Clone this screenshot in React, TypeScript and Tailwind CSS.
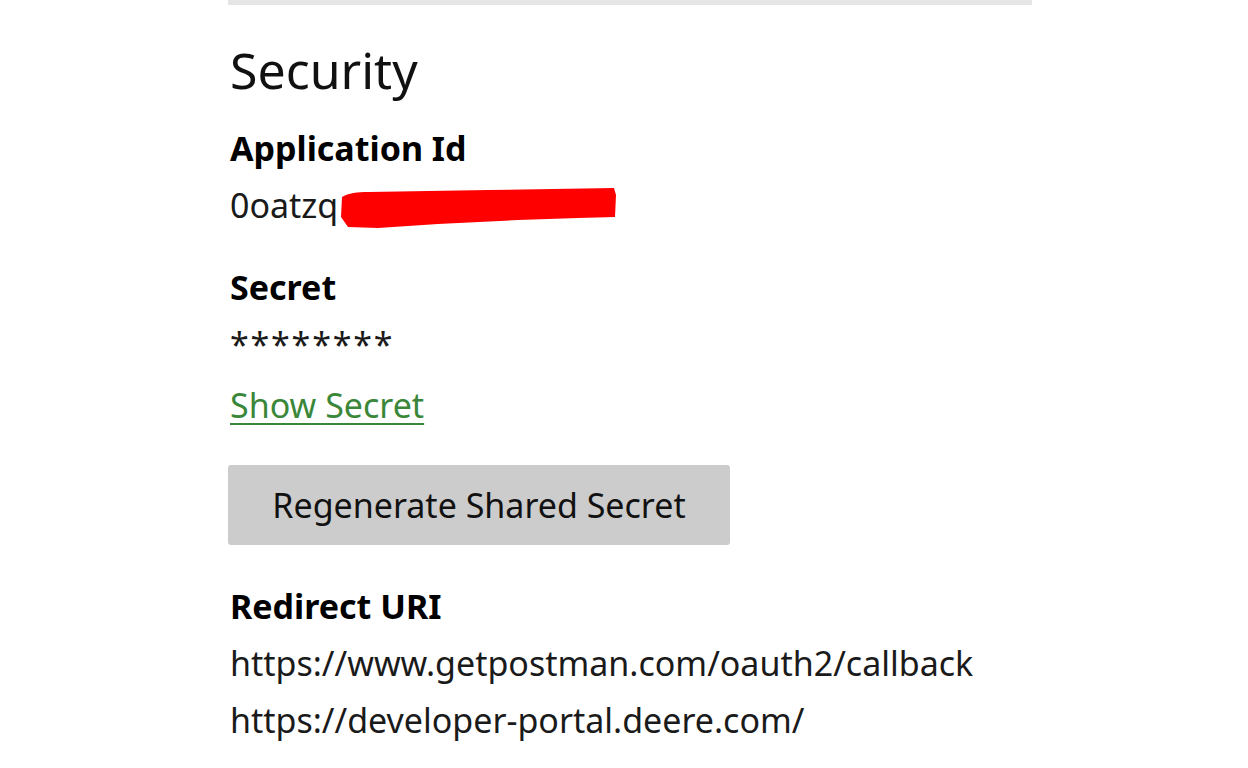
const redirectUris = [
  'https://www.getpostman.com/oauth2/callback',
  'https://developer-portal.deere.com/',
];

function Label({ children }: { children: React.ReactNode }) {
  return <div className="text-[34px] leading-[57px] font-bold text-black">{children}</div>;
}

function Value({ children, className = '' }: { children: React.ReactNode; className?: string }) {
  return <div className={`text-[34px] leading-[57px] text-[#1a1a1a] ${className}`}>{children}</div>;
}

export default function App() {
  return (
    <div
      className="w-[1248px] h-[768px] bg-white overflow-hidden"
      style={{ fontFamily: '"Noto Sans", "Open Sans", sans-serif' }}>
      <div className="ml-[228px] w-[804px]">
        <div className="h-[5px] bg-[#e5e5e5]" />
        <div className="pl-[2px]">
          <h2 className="mt-[35px] text-[50px] leading-[60px] text-[#111]">Security</h2>

          <div className="mt-[20px]">
            <Label>Application Id</Label>
            <div className="relative">
              <Value>0oatzq</Value>
              {/* redaction scribble */}
              <svg
                className="absolute left-[108px] top-[10px]"
                width="280"
                height="42"
                viewBox="0 0 280 42">
                <path
                  d="M4 10 C10 6 20 5 30 5 L150 3 L276 1 L278 8 L277 30 L240 31 L180 33 L100 37 L40 41 L10 40 L3 30 Z"
                  fill="#ff0000"
                />
              </svg>
            </div>
          </div>

          <div className="mt-[25px]">
            <Label>Secret</Label>
            <Value className="tracking-[1.8px]">********</Value>
          </div>

          <a
            href="#"
            className="block mt-[4px] text-[34px] leading-[57px] text-[#3a873a] underline underline-offset-[5px] decoration-2">
            Show Secret
          </a>
        </div>

        <button className="mt-[31px] w-[502px] h-[80px] bg-[#cccccc] rounded-[3px] text-[34px] text-[#111]">
          Regenerate Shared Secret
        </button>

        <div className="pl-[2px] mt-[33px]">
          <Label>Redirect URI</Label>
          {redirectUris.map((uri) => (
            <Value key={uri}>{uri}</Value>
          ))}
        </div>
      </div>
    </div>
  );
}
